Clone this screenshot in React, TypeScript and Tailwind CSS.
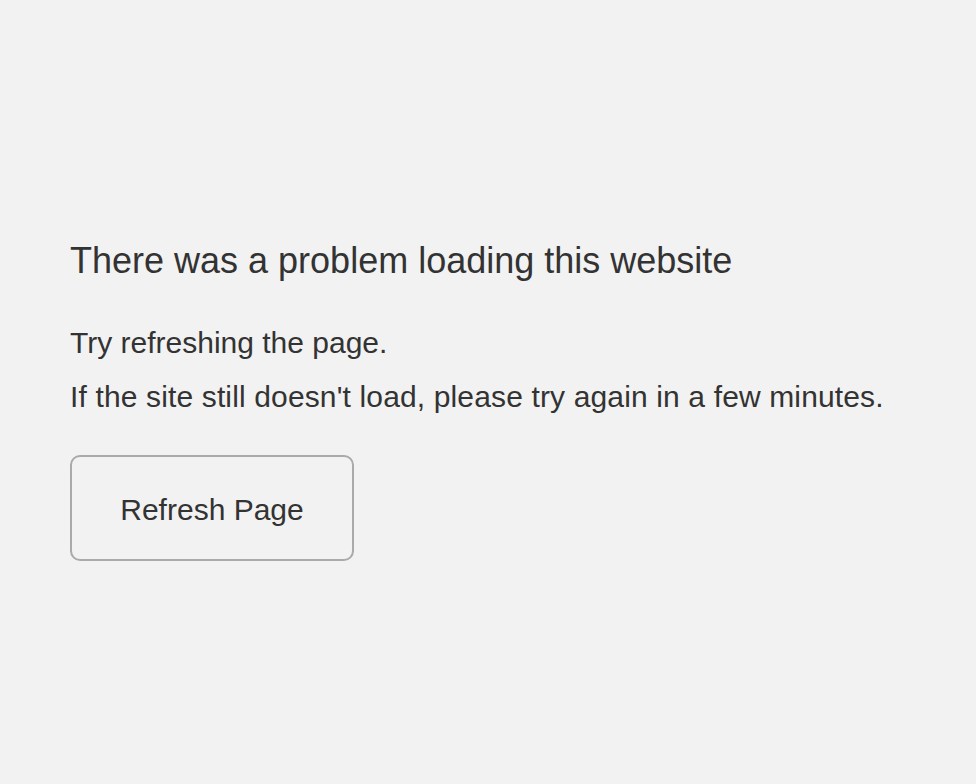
import React from 'react';

export default function App() {
  return (
    <div
      className="min-h-screen w-full bg-[#f2f2f2] px-[70px] pt-[239px] text-[#333333]"
      style={{ fontFamily: '"Liberation Sans", Arial, Helvetica, sans-serif' }}
    >
      <h1 className="text-[36px] leading-[43px] font-normal">
        There was a problem loading this website
      </h1>

      <p className="mt-[34px] text-[30px] leading-[54px]">Try refreshing the page.</p>
      <p className="text-[30px] leading-[54px] tracking-[0.14px]">
        If the site still doesn't load, please try again in a few minutes.
      </p>

      <button
        type="button"
        onClick={() => window.location.reload()}
        className="mt-[31px] flex h-[106px] w-[284px] items-center justify-center rounded-[10px] border-2 border-[#aaaaaa] bg-transparent pt-[2px] text-[30px] text-[#333333]"
      >
        Refresh Page
      </button>
    </div>
  );
}
